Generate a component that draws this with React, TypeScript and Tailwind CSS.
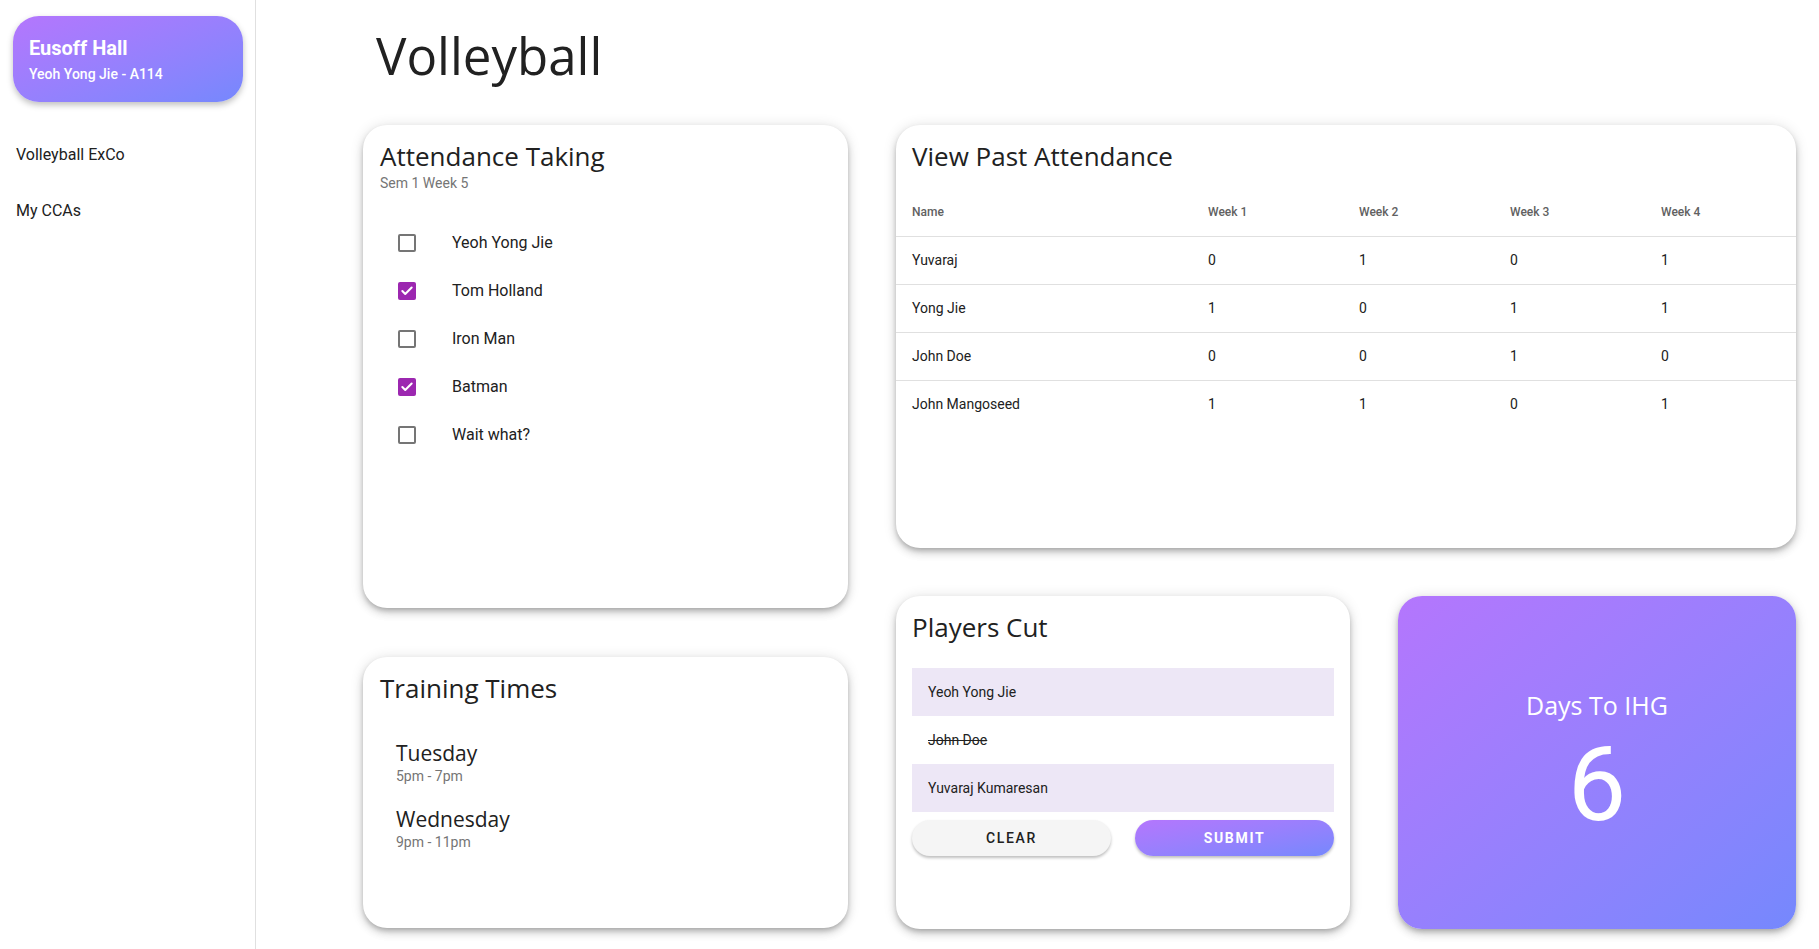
import { Check } from 'lucide-react';

const heading = "font-['Open_Sans','DejaVu_Sans',sans-serif]";

const players = [
  { name: 'Yeoh Yong Jie', checked: false },
  { name: 'Tom Holland', checked: true },
  { name: 'Iron Man', checked: false },
  { name: 'Batman', checked: true },
  { name: 'Wait what?', checked: false },
];

const pastAttendance = [
  { name: 'Yuvaraj', weeks: [0, 1, 0, 1] },
  { name: 'Yong Jie', weeks: [1, 0, 1, 1] },
  { name: 'John Doe', weeks: [0, 0, 1, 0] },
  { name: 'John Mangoseed', weeks: [1, 1, 0, 1] },
];

const trainings = [
  { day: 'Tuesday', time: '5pm - 7pm' },
  { day: 'Wednesday', time: '9pm - 11pm' },
];

const cardClass =
  'bg-white rounded-[24px] shadow-[0_3px_5px_-1px_rgba(0,0,0,0.2),0_5px_8px_0_rgba(0,0,0,0.14),0_1px_14px_0_rgba(0,0,0,0.12)]';

export default function App() {
  return (
    <div className="flex min-h-screen bg-white font-['Roboto',sans-serif] text-[#212121]">
      {/* Sidebar */}
      <aside className="w-[256px] shrink-0 border-r border-[#e0e0e0] pt-4 pl-[13px] pr-[12px]">
        <div className="h-[86px] w-[230px] rounded-[26px] bg-gradient-to-br from-[#b476fd] to-[#7588fd] px-4 pt-[18px] text-white shadow-[0_3px_6px_rgba(0,0,0,0.25)]">
          <div className="text-[20px] font-bold leading-[28px]">Eusoff Hall</div>
          <div className="mt-[3px] text-[14px] font-medium leading-[18px]">Yeoh Yong Jie - A114</div>
        </div>
        <nav className="mt-[25px] flex flex-col">
          <a className="flex h-[56px] items-center px-[3px] text-[16px]">Volleyball ExCo</a>
          <a className="flex h-[56px] items-center px-[3px] text-[16px]">My CCAs</a>
        </nav>
      </aside>

      {/* Main */}
      <main className="flex-1 pl-[107px] pr-[23px]">
        <h1 className={`${heading} pl-[13px] pt-[20px] text-[51px] leading-[70px] text-[#212121]`}>Volleyball</h1>

        <div className="mt-[35px] flex gap-[48px]">
          {/* Left column */}
          <div className="flex w-[485px] flex-col gap-[49px]">
            <section className={`${cardClass} h-[483px] px-[17px] pt-[12px]`}>
              <h2 className={`${heading} text-[26px] leading-[38px]`}>Attendance Taking</h2>
              <p className="-mt-[2px] text-[14px] leading-[20px] text-[#757575]">Sem 1 Week 5</p>
              <ul className="mt-[26px]">
                {players.map((p) => (
                  <li key={p.name} className="flex h-[48px] items-center pl-[18px]">
                    {p.checked ? (
                      <span className="flex h-[18px] w-[18px] items-center justify-center rounded-[2px] bg-[#9c27b0]">
                        <Check size={14} strokeWidth={3.5} color="white" />
                      </span>
                    ) : (
                      <span className="h-[18px] w-[18px] rounded-[2px] border-2 border-[#757575]" />
                    )}
                    <span className="ml-[36px] text-[16px]">{p.name}</span>
                  </li>
                ))}
              </ul>
            </section>

            <section className={`${cardClass} h-[271px] px-[17px] pt-[12px]`}>
              <h2 className={`${heading} text-[26px] leading-[38px]`}>Training Times</h2>
              <div className="mt-[32px] flex flex-col gap-[20px] pl-[16px]">
                {trainings.map((t) => (
                  <div key={t.day}>
                    <div className={`${heading} text-[21px] leading-[28px]`}>{t.day}</div>
                    <div className="text-[14px] leading-[18px] text-[#757575]">{t.time}</div>
                  </div>
                ))}
              </div>
            </section>
          </div>

          {/* Right column */}
          <div className="flex w-[900px] flex-col gap-[48px]">
            <section className={`${cardClass} h-[423px] pt-[12px]`}>
              <h2 className={`${heading} px-4 text-[26px] leading-[38px]`}>View Past Attendance</h2>
              <table className="mt-[13px] w-full table-fixed border-collapse text-left">
                <thead>
                  <tr className="h-[48px] border-b border-[#e0e0e0]">
                    <th className="w-[296px] px-4 text-[12px] font-medium text-[#616161]">Name</th>
                    {['Week 1', 'Week 2', 'Week 3', 'Week 4'].map((w) => (
                      <th key={w} className="px-4 text-[12px] font-medium text-[#616161]">{w}</th>
                    ))}
                  </tr>
                </thead>
                <tbody>
                  {pastAttendance.map((row, i) => (
                    <tr
                      key={row.name}
                      className={`h-[48px] ${i < pastAttendance.length - 1 ? 'border-b border-[#e0e0e0]' : ''}`}
                    >
                      <td className="px-4 text-[14px]">{row.name}</td>
                      {row.weeks.map((v, j) => (
                        <td key={j} className="px-4 text-[14px]">{v}</td>
                      ))}
                    </tr>
                  ))}
                </tbody>
              </table>
            </section>

            <div className="flex gap-[48px]">
              <section className={`${cardClass} h-[333px] w-[454px] px-4 pt-[12px]`}>
                <h2 className={`${heading} text-[26px] leading-[38px]`}>Players Cut</h2>
                <div className="mt-[22px] flex flex-col">
                  <div className="flex h-[48px] items-center bg-[#ede7f6] px-4 text-[14px]">Yeoh Yong Jie</div>
                  <div className="flex h-[48px] items-center px-4 text-[14px] line-through">John Doe</div>
                  <div className="flex h-[48px] items-center bg-[#ede7f6] px-4 text-[14px]">Yuvaraj Kumaresan</div>
                </div>
                <div className="mt-[8px] flex gap-[24px]">
                  <button className="h-[36px] flex-1 rounded-full bg-[#f5f5f5] text-[14px] font-medium tracking-[0.12em] text-[#212121] shadow-[0_2px_3px_rgba(0,0,0,0.25)]">
                    CLEAR
                  </button>
                  <button className="h-[36px] flex-1 rounded-full bg-gradient-to-br from-[#b476fd] to-[#7588fd] text-[14px] font-bold tracking-[0.12em] text-white shadow-[0_2px_3px_rgba(0,0,0,0.25)]">
                    SUBMIT
                  </button>
                </div>
              </section>

              <section className="flex h-[333px] w-[398px] flex-col items-center justify-center rounded-[24px] bg-gradient-to-br from-[#b476fd] to-[#7588fd] pb-[5px] text-white shadow-[0_3px_5px_-1px_rgba(0,0,0,0.2),0_5px_8px_0_rgba(0,0,0,0.14),0_1px_14px_0_rgba(0,0,0,0.12)]">
                <div className={`${heading} text-[25px] leading-[34px]`}>Days To IHG</div>
                <div className="mt-[15px] text-[104px] leading-[96px]">6</div>
              </section>
            </div>
          </div>
        </div>
      </main>
    </div>
  );
}
